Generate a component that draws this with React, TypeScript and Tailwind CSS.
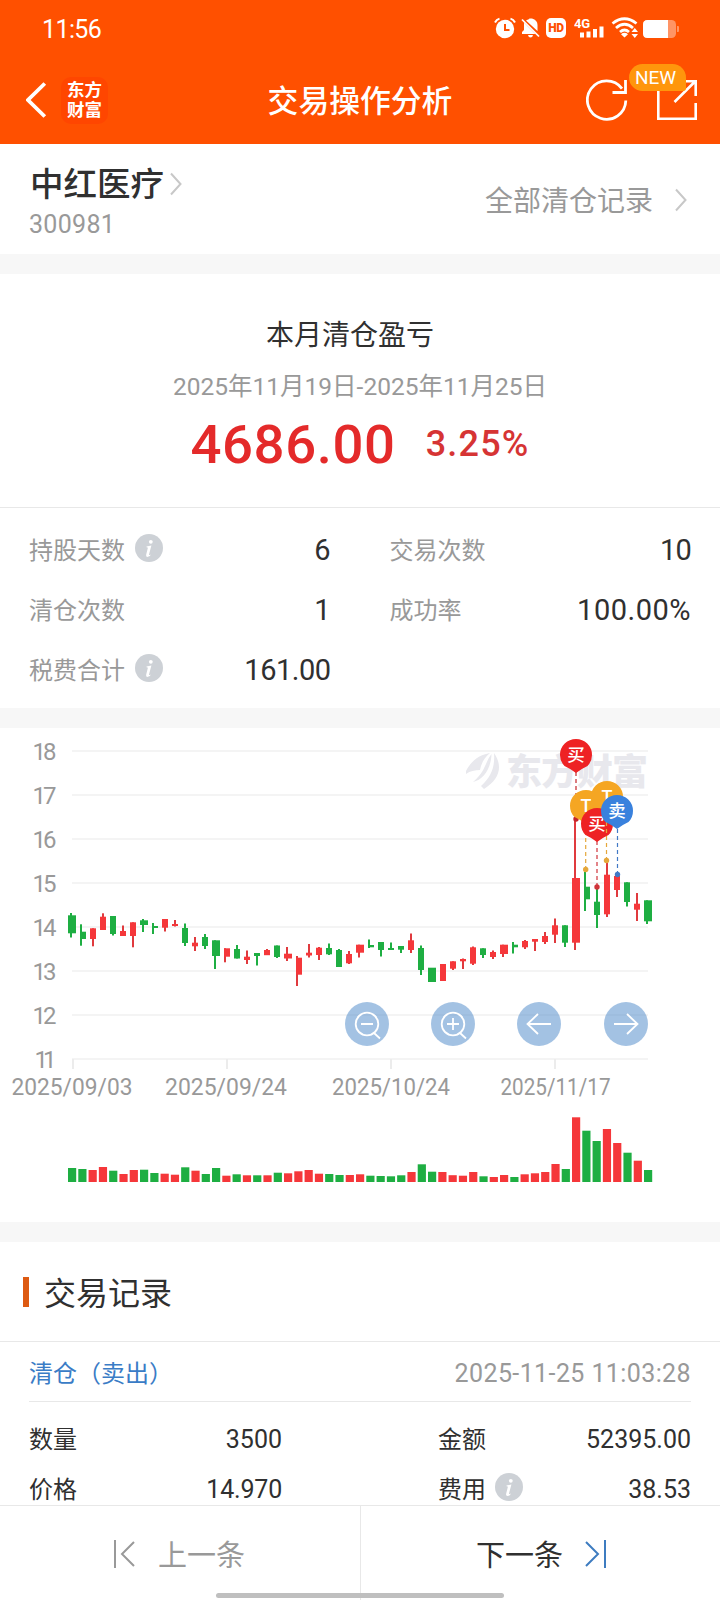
import type { ReactNode } from 'react';

type Candle = [c: 'r' | 'g', x: number, w: number, top: number, bottom: number, wick: number, high: number, low: number, volume: number];

const RED = '#f5373a';
const GREEN = '#1eae42';

/* Coordinates are in the drawing's own space, which starts at y = 728. */
const candles: Candle[] = [
  ['g', 68, 8, 915.3, 933.3, 70, 913, 937.5, 14],
  ['g', 81, 5, 931.7, 939, 80, 924.3, 945.7, 13],
  ['r', 90, 6, 928.3, 939, 92, 928.3, 946.3, 12],
  ['r', 100, 6, 916.7, 930, 102, 913.3, 930, 15],
  ['g', 110, 6, 916, 934, 112, 916, 935.5, 11.3],
  ['r', 120, 6, 931, 936, 122, 925.5, 936, 8],
  ['r', 130, 6, 922.3, 936, 132, 922.3, 947.3, 12],
  ['g', 140, 8, 920.3, 925, 142, 919, 932, 12.3],
  ['g', 152, 6, 926, 928, 152, 923, 934, 9],
  ['r', 162, 6, 919, 927.7, 164, 919, 931.5, 8.3],
  ['r', 172, 6, 924, 926, 174, 920, 926.5, 7.3],
  ['g', 182, 6, 928, 943, 184, 923.5, 946, 14.7],
  ['r', 192, 6, 942.7, 946.3, 194, 937, 951, 11.3],
  ['g', 202, 6, 937, 946, 204, 934, 949, 8],
  ['g', 212, 8, 940.3, 956, 214, 940.3, 969, 14],
  ['r', 224, 6, 948.3, 956.7, 224, 948.3, 962.3, 6.3],
  ['g', 234, 6, 949, 958.5, 236, 945, 958.5, 7.7],
  ['r', 244, 6, 956.7, 960, 246, 950.5, 964, 6.7],
  ['g', 254, 6, 953, 956, 256, 953, 965.5, 6.7],
  ['r', 264, 6, 950, 955.2, 266, 949, 955, 6.7],
  ['g', 274, 6, 945.5, 957, 276, 945.5, 958, 9.3],
  ['r', 284, 8, 953.7, 958.5, 286, 947, 961, 8.7],
  ['r', 296, 6, 957.7, 974.7, 296, 956, 986, 10.7],
  ['r', 306, 6, 952.7, 955.5, 308, 944, 957.5, 12],
  ['r', 316, 6, 947.7, 955, 318, 947, 960, 8.3],
  ['g', 326, 6, 948, 954.3, 328, 943.5, 955, 8],
  ['g', 336, 6, 950, 967, 338, 949, 967, 7],
  ['r', 346, 6, 954, 963.3, 348, 951, 964, 7],
  ['r', 356, 8, 944.7, 952.7, 358, 944.7, 957.5, 7.7],
  ['g', 368, 6, 945, 947.3, 368, 939.5, 948, 6.3],
  ['g', 378, 6, 942, 950, 380, 942, 956.5, 6],
  ['g', 388, 6, 948, 950, 390, 942.5, 950, 5.7],
  ['g', 398, 6, 946, 949.7, 400, 946, 953, 6.7],
  ['r', 408, 6, 940.3, 950, 410, 933.5, 953, 10],
  ['g', 418, 6, 948, 970, 420, 945.5, 975, 17.7],
  ['g', 428, 8, 967.7, 982, 430, 968, 982, 10.3],
  ['r', 440, 6, 964, 981, 442, 964, 981, 10],
  ['r', 450, 6, 961.3, 968.7, 452, 961.3, 970, 6.8],
  ['r', 460, 6, 959, 961.3, 462, 958.5, 969, 6.3],
  ['r', 470, 6, 947.3, 963.7, 472, 946.5, 965, 10],
  ['g', 480, 6, 948.3, 955, 482, 948.3, 958, 5.7],
  ['r', 490, 6, 952, 957, 492, 950.5, 959, 5],
  ['r', 500, 8, 944.7, 954, 502, 944.7, 957, 7],
  ['g', 512, 6, 944.7, 947.3, 512, 942, 953.5, 5],
  ['r', 522, 6, 941, 947.3, 524, 940, 949, 7.7],
  ['r', 532, 6, 939, 941.7, 534, 939, 951, 8.7],
  ['r', 542, 6, 936, 942, 544, 932, 944, 10],
  ['r', 552, 6, 925.3, 934.7, 554, 918.5, 943, 18],
  ['g', 562, 6, 925.3, 942.7, 564, 925.3, 947, 13],
  ['r', 572, 8, 878, 942.7, 574, 820, 950, 64.7],
  ['g', 584, 6, 886.7, 899.3, 584, 872, 911, 51.3],
  ['g', 594, 6, 901.7, 915, 596, 888, 928, 41],
  ['r', 604, 6, 874.7, 914.3, 606, 863, 917, 53],
  ['r', 614, 6, 876, 890, 616, 876, 897, 39],
  ['g', 624, 6, 882.3, 902, 626, 882.3, 906.5, 29.3],
  ['r', 634, 6, 903.7, 909.7, 636, 893, 921, 21.3],
  ['g', 644, 8, 900.3, 921.3, 646, 900.3, 924, 12],
];

const dates = [
  { tick: 73, x: 72, label: '2025/09/03', width: 121 },
  { tick: 227, x: 226, label: '2025/09/24', width: 122 },
  { tick: 391, x: 391, label: '2025/10/24', width: 118 },
  { tick: 555, x: 555.5, label: '2025/11/17', width: 110 },
];

function Pin({ x, y, color, text }: { x: number; y: number; color: string; text: string }) {
  return (
    <g>
      <path
        d={`M${x - 11.5} ${y + 11} A16 16 0 1 1 ${x + 11.5} ${y + 11} Q${x + 5} ${y + 14} ${x} ${y + 18} Q${x - 5} ${y + 14} ${x - 11.5} ${y + 11}Z`}
        fill={color}
      />
      <text x={x} y={y + 6} textAnchor="middle" fontSize={text === 'T' ? 18 : 17.5} fontWeight="500" fill="#fff">
        {text}
      </text>
    </g>
  );
}

function Guide({ x, from, to, color }: { x: number; from: number; to: number; color: string }) {
  return (
    <g>
      <line x1={x} y1={from} x2={x} y2={to} stroke={color} strokeWidth="1.2" strokeDasharray="4 3" />
      <circle cx={x} cy={to} r="2.7" fill={color} />
    </g>
  );
}

function ChartButton({ x, children }: { x: number; children: ReactNode }) {
  return (
    <g transform={`translate(${x} 1024)`} fill="none" stroke="#fff" strokeWidth="1.8">
      <circle r="22" fill="#4886c8" fillOpacity="0.5" stroke="none" />
      {children}
    </g>
  );
}

function Chart() {
  return (
    <svg width="720" height="494" viewBox="0 728 720 494" className="block">
      {[18, 17, 16, 15, 14, 13, 12, 11].map((v, i) => (
        <g key={v}>
          <rect x="72" y={750 + i * 44} width="576" height="2" fill="#f4f4f4" />
          <text x="56.5" y={759.5 + i * 44} textAnchor="end" fontSize="24" fill="#999" textLength={v === 11 ? 22 : 24}>
            {v}
          </text>
        </g>
      ))}
      {dates.map((d) => (
        <g key={d.label}>
          <rect x={d.tick - 1} y="1059" width="2" height="10" fill="#ececec" />
          <text x={d.x} y="1095" textAnchor="middle" fontSize="24" fill="#999" textLength={d.width} lengthAdjust="spacingAndGlyphs">
            {d.label}
          </text>
        </g>
      ))}

      <g fill="#e8e8ed">
        <path d="M466 771 C471 761 479 755 490 753 C484 758 481 764 480 770 C475 770 470 771 466 774Z" />
        <path d="M491.500 754 C485 762 486 771 473 782 C483 780 491 769 491.500 754Z" />
        <path d="M494 753 C503 766 500 779 484 789 C483 788 482 787 481 786 C492 776 495 766 494 753Z" />
        <text x="506" y="785" fontSize="36" fontWeight="900" textLength="142" fontFamily="'Noto Sans CJK SC', sans-serif">
          东方财富
        </text>
      </g>

      {candles.map(([c, x, w, top, bottom, wick, high, low, volume], i) => (
        <g key={i} fill={c === 'r' ? RED : GREEN}>
          <rect x={wick} y={high} width="2" height={low - high} fill={c === 'r' ? '#e03a3e' : GREEN} />
          <rect x={x} y={top} width={w} height={bottom - top} />
          <rect x={68 + i * 10.2857} y={1182 - volume} width="8.2" height={volume} />
        </g>
      ))}

      <Guide x={576} from={772} to={819} color="#c4252b" />
      <Pin x={576} y={755} color="#ee2224" text="买" />
      <Guide x={585.7} from={824} to={869.5} color="#e5a73a" />
      <Pin x={586} y={806} color="#f5a623" text="T" />
      <Pin x={607} y={797} color="#f5a623" text="T" />
      <Guide x={597} from={841} to={887} color="#d0333a" />
      <Pin x={597} y={824} color="#ee2224" text="买" />
      <Guide x={606.5} from={815} to={860.5} color="#e5a73a" />
      <Guide x={617.5} from={829} to={874.5} color="#4279c6" />
      <Pin x={617} y={811} color="#3981dd" text="卖" />

      <ChartButton x={367}>
        <circle r="11.3" />
        <path d="M-6 0H6M7 9L13 14.5" />
      </ChartButton>
      <ChartButton x={453}>
        <circle r="11.3" />
        <path d="M-6 0H6M0 -6V6M7 9L13 14.5" />
      </ChartButton>
      <ChartButton x={539}>
        <path d="M12 0H-11M-1 -10L-11.5 0L-1 10" />
      </ChartButton>
      <ChartButton x={626}>
        <path d="M-12 0H11M1 -10L11.5 0L1 10" />
      </ChartButton>
    </svg>
  );
}

function Info() {
  return (
    <svg width="28" height="28" viewBox="0 0 28 28" className="shrink-0">
      <circle cx="14" cy="14" r="14" fill="#cdd1d6" />
      <circle cx="15.8" cy="7.8" r="1.9" fill="#fff" />
      <path d="M11.5 12.6 L16.4 11.5 L14 20.6 Q14 21.8 16.2 20.2 Q14.8 23 12.3 23 Q10.6 22.8 11.2 20.4 L12.9 13.8 Q12.6 13.2 11.5 13.3Z" fill="#fff" />
    </svg>
  );
}

function Chevron({ className }: { className: string }) {
  return (
    <svg width="12" height="24" viewBox="0 0 12 24" className={className} fill="none" stroke="#c8c8c8" strokeWidth="2">
      <path d="M1 1.5L10.5 12L1 22.5" />
    </svg>
  );
}

function StatusIcons() {
  return (
    <div className="flex items-center text-white">
      <svg width="22" height="22" viewBox="0 0 22 22">
        <circle cx="11" cy="12" r="9.2" fill="#fff" />
        <path d="M1 5.5Q2.5 2.5 5.5 1.6M21 5.5Q19.500 2.5 16.500 1.600" stroke="#fff" strokeWidth="2" fill="none" />
        <path d="M11 7V13H15.500" stroke="#ff5000" strokeWidth="2" fill="none" />
      </svg>
      <svg width="19" height="22" viewBox="0 0 19 22" className="ml-[5px]">
        <path d="M6.500 2.800Q8 2.500 8.500 1.500H11Q16.500 3 16.500 8V14L5 3.600Z M3 5.500L14.500 17H1V15L3 13Z M7 18H12Q11.500 20.500 9.500 20.500T7 18Z" fill="#fff" />
        <path d="M1 2.500L18 19.500" stroke="#fff" strokeWidth="1.700" />
      </svg>
      <div className="ml-[6px] flex h-5 w-5 items-center justify-center rounded-[5px] bg-white text-[12px] font-black leading-none tracking-[-0.3px] text-[#ff5000]">HD</div>
      <svg width="31" height="22" viewBox="0 0 31 22" className="ml-2">
        <text x="0" y="11" fontSize="13" fontWeight="700" fill="#fff" textLength="16">4G</text>
        <path d="M6 15.500h4v5h-4zM12.500 14.500h4v6h-4zM19 12h4v8.500h-4zM25.500 9.500h4v11h-4z" fill="#fff" />
      </svg>
      <svg width="28" height="22" viewBox="0 0 28 22" className="ml-[6px]" fill="none" stroke="#fff" strokeWidth="2.800">
        <path d="M1.500 6.500Q13.500 -3 25.500 6.500M5 11Q13.500 3.500 22 11M9 15Q13.500 11 18 15" />
        <path d="M10 17.200Q13.500 14.500 17 17.200L13.500 20.500Z" fill="#fff" stroke="none" />
        <path d="M20.500 15L23.800 11L27 15ZM20.500 17L23.800 21L27 17Z" fill="#fff" stroke="none" />
      </svg>
      <svg width="36" height="20" viewBox="0 0 36 20" className="ml-1 mt-px">
        <rect x="0" y="1" width="33" height="18" rx="4.500" fill="#ff9465" />
        <path d="M34 7h1q1 0 1 1v4q0 1-1 1h-1z" fill="#ff9465" />
        <path d="M4.500 1H25V19H4.500Q0 19 0 14.500V5.500Q0 1 4.500 1Z" fill="#fff" />
      </svg>
    </div>
  );
}

function Header() {
  return (
    <header className="h-36 bg-[#ff5000] text-white">
      <div className="flex h-14 items-center justify-between pl-[42px] pr-[41px]">
        <span className="pt-[3px] text-[25px] leading-none tracking-[-0.6px]">11:56</span>
        <StatusIcons />
      </div>
      <div className="flex h-[88px] items-center justify-between pl-[26px] pr-[22px]">
        <div className="flex w-[174px] items-center gap-[14px]">
          <svg width="21" height="36" viewBox="0 0 21 36" fill="none" stroke="#fff" strokeWidth="3.800">
            <path d="M18.800 1.500L2 18L18.800 34.500" />
          </svg>
          <div className="flex h-[47px] w-[47px] flex-col items-center justify-center rounded-[10px] bg-[#ff4600] pt-px text-[17.500px] font-bold leading-[19.500px]">
            <span>东方</span>
            <span>财富</span>
          </div>
        </div>
        <h1 className="pt-[5px] text-[30.800px] font-medium leading-none">交易操作分析</h1>
        <div className="relative flex w-[178px] justify-end gap-7">
          <svg width="42" height="42" viewBox="0 0 42 42" fill="none" stroke="#fff" strokeWidth="2.800">
            <path d="M39.800 21.500A19.200 19.200 0 1 1 36 9.600" />
            <path d="M39.500 1V13.500H26.500" />
          </svg>
          <svg width="42" height="42" viewBox="0 0 42 42" fill="none" stroke="#fff" strokeWidth="2.600">
            <path d="M14 2.300H2.300V39.700H39.700V24" />
            <path d="M18.500 23L39 2.500M24 2.300H39.700V17" />
          </svg>
          <div className="absolute -top-[15px] right-3 flex h-[27px] w-[57px] items-center justify-center rounded-[13.500px] rounded-br-[3px] bg-[#ff960c] pr-1 text-[19px] leading-none">NEW</div>
        </div>
      </div>
    </header>
  );
}

function Stat({ label, value, info, tracking = '' }: { label: string; value: string; info?: boolean; tracking?: string }) {
  return (
    <div className="flex h-[60px] items-center">
      <span className="pt-[2px] text-2xl leading-none text-[#999]">{label}</span>
      {info && <span className="-mt-1 ml-[10px]"><Info /></span>}
      <span className={`ml-auto text-[29px] leading-none text-[#303030] ${tracking}`}>{value}</span>
    </div>
  );
}

function Divider() {
  return <div className="h-5 bg-[#f7f7f7]" />;
}

export default function App() {
  return (
    <div className="flex h-[1600px] w-[720px] flex-col overflow-hidden bg-white font-[Roboto,'Noto_Sans_CJK_SC',sans-serif] text-[#303030]">
      <Header />

      <section className="flex h-[110px] items-center justify-between pl-[30px] pr-[33px]">
        <div className="pt-[5px]">
          <div className="flex items-center gap-[6px]">
            <h2 className="pt-[2px] text-[33.500px] font-medium leading-[40px]">中红医疗</h2>
            <Chevron className="" />
          </div>
          <div className="-ml-px pt-[5px] text-[25px] leading-[30px] tracking-[0.3px] text-[#999]">300981</div>
        </div>
        <div className="flex items-center gap-[22px] text-[28px] leading-none text-[#999]">
          <span className="pt-[6px]">全部清仓记录</span>
          <Chevron className="mt-px" />
        </div>
      </section>
      <Divider />

      <section className="h-[434px]">
        <div className="flex h-[233px] flex-col items-center pt-12">
          <h3 className="pr-5 text-[28px] leading-[28px]">本月清仓盈亏</h3>
          <div className="mt-[23px] text-[24.500px] leading-[28px] text-[#999]">2025年11月19日-2025年11月25日</div>
          <div className="mt-[13px] flex items-center gap-[30px] font-medium text-[#e42a2a]">
            <span className="text-[54.500px] leading-[60px] tracking-[0.600px]">4686.00</span>
            <span className="text-[36px] leading-[60px] tracking-[1.200px] text-[#d63434]">3.25%</span>
          </div>
        </div>
        <div className="h-px bg-[#e8e8e8]" />
        <div className="grid grid-cols-2 gap-x-[59px] pl-[29px] pr-[29px] pt-3">
          <Stat label="持股天数" value="6" info />
          <Stat label="交易次数" value="10" tracking="tracking-[-0.8px]" />
          <Stat label="清仓次数" value="1" />
          <Stat label="成功率" value="100.00%" tracking="tracking-[0.5px]" />
          <Stat label="税费合计" value="161.00" info tracking="tracking-[-0.5px]" />
        </div>
      </section>
      <Divider />

      <Chart />
      <Divider />

      <section className="flex h-[263px] flex-col overflow-hidden">
        <div className="flex h-[99px] shrink-0 items-center gap-[15px] pl-[23px]">
          <div className="h-[30px] w-[6px] bg-[#dd5a12]" />
          <h3 className="pt-1 text-[32px] leading-none">交易记录</h3>
        </div>
        <div className="h-px shrink-0 bg-[#e8e8e8]" />
        <div className="mx-[29px] flex h-[60px] shrink-0 items-center justify-between border-b border-[#e8e8e8] pt-1">
          <span className="text-2xl leading-none text-[#3a7cc6]">清仓（卖出）</span>
          <span className="text-[25px] leading-none tracking-[0.4px] text-[#999]">2025-11-25 11:03:28</span>
        </div>
        <div className="grid shrink-0 grid-cols-[253px_253px] justify-between pl-[29px] pr-[29px] pt-[13px] text-2xl leading-none">
          <div className="flex h-[50px] items-center justify-between"><span>数量</span><span className="pb-px text-[25px]">3500</span></div>
          <div className="flex h-[50px] items-center justify-between"><span>金额</span><span className="pb-px text-[25px]">52395.00</span></div>
          <div className="flex h-[50px] items-center justify-between"><span>价格</span><span className="pb-px text-[25px] tracking-[-0.2px]">14.970</span></div>
          <div className="flex h-[50px] items-center"><span className="mr-[9px]">费用</span><span className="-mt-[7px]"><Info /></span><span className="ml-auto pb-px text-[25px]">38.53</span></div>
        </div>
      </section>

      <nav className="relative flex h-[95px] border-t border-[#e8e8e8] bg-white text-[29px] leading-none">
        <div className="flex h-[95px] w-[361px] items-center gap-[23px] border-r border-[#e8e8e8] pl-[114px] text-[#999]">
          <svg width="21" height="28" viewBox="0 0 21 28" fill="none" stroke="currentColor" strokeWidth="2">
            <path d="M1 0V28M20 2L8 14L20 26" />
          </svg>
          <span className="pt-[5px]">上一条</span>
        </div>
        <div className="flex h-[95px] items-center gap-[22px] pl-[115px]">
          <span className="pt-[5px]">下一条</span>
          <svg width="21" height="28" viewBox="0 0 21 28" fill="none" stroke="#3e7cc0" strokeWidth="2">
            <path d="M20 0V28M1 2L13 14L1 26" />
          </svg>
        </div>
        <div className="absolute bottom-[2px] left-[216px] h-[5px] w-[288px] rounded-full bg-[#bfbfbf]" />
      </nav>
    </div>
  );
}
